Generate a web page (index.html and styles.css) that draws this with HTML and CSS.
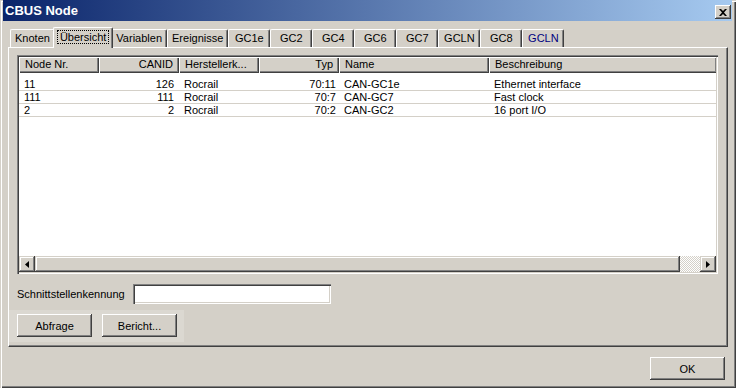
FILE: index.html
```html
<!DOCTYPE html>
<html lang="de">

<head>
    <meta charset="UTF-8">
    <title>CBUS Node</title>
    <link rel="stylesheet" href="styles.css">
</head>

<body>
    <div class="window">
        <div class="titlebar">
            <span class="title">CBUS Node</span>
            <button class="close-btn" type="button">
                <svg width="8" height="7" viewBox="0 0 8 7">
                    <path d="M0 0h2l2 2 2-2h2L5 3.5 8 7H6L4 5 2 7H0l3-3.5z" fill="#000" />
                </svg>
            </button>
        </div>

        <div class="client">
            <div class="tabs">
                <div class="tab">Knoten</div>
                <div class="tab selected"><span class="focus">Übersicht</span></div>
                <div class="tab">Variablen</div>
                <div class="tab">Ereignisse</div>
                <div class="tab">GC1e</div>
                <div class="tab">GC2</div>
                <div class="tab">GC4</div>
                <div class="tab">GC6</div>
                <div class="tab">GC7</div>
                <div class="tab">GCLN</div>
                <div class="tab">GC8</div>
                <div class="tab hot">GCLN</div>
            </div>

            <div class="panel">
                <div class="listview">
                    <div class="lv-header">
                        <div class="col">Node Nr.</div>
                        <div class="col right">CANID</div>
                        <div class="col">Herstellerk...</div>
                        <div class="col right">Typ</div>
                        <div class="col">Name</div>
                        <div class="col">Beschreibung</div>
                    </div>
                    <div class="lv-body">
                        <div class="lv-row">
                            <div class="cell">11</div>
                            <div class="cell right">126</div>
                            <div class="cell">Rocrail</div>
                            <div class="cell right typ">70:11</div>
                            <div class="cell">CAN-GC1e</div>
                            <div class="cell">Ethernet interface</div>
                        </div>
                        <div class="lv-row">
                            <div class="cell">111</div>
                            <div class="cell right">111</div>
                            <div class="cell">Rocrail</div>
                            <div class="cell right typ">70:7</div>
                            <div class="cell">CAN-GC7</div>
                            <div class="cell">Fast clock</div>
                        </div>
                        <div class="lv-row">
                            <div class="cell">2</div>
                            <div class="cell right">2</div>
                            <div class="cell">Rocrail</div>
                            <div class="cell right typ">70:2</div>
                            <div class="cell">CAN-GC2</div>
                            <div class="cell">16 port I/O</div>
                        </div>
                    </div>
                    <div class="hscroll">
                        <div class="sb-btn">
                            <svg width="4" height="7" viewBox="0 0 4 7"><polygon points="4,0 0,3.5 4,7" fill="#000" /></svg>
                        </div>
                        <div class="sb-thumb"></div>
                        <div class="sb-track"></div>
                        <div class="sb-btn">
                            <svg width="4" height="7" viewBox="0 0 4 7"><polygon points="0,0 4,3.5 0,7" fill="#000" /></svg>
                        </div>
                    </div>
                </div>

                <div class="field-row">
                    <label for="ifaceId">Schnittstellenkennung</label>
                    <input class="text-input" type="text" id="ifaceId">
                </div>

                <div class="button-row">
                    <button class="btn" type="button">Abfrage</button>
                    <button class="btn" type="button">Bericht...</button>
                </div>
            </div>

            <div class="footer">
                <button class="btn" type="button">OK</button>
            </div>
        </div>
    </div>
</body>

</html>
```

FILE: styles.css
```css
body {
    margin: 0;
    font-family: "Liberation Sans", Arial, sans-serif;
    font-size: 11px;
    color: #000;
}

.window {
    width: 736px;
    height: 388px;
    box-sizing: border-box;
    background-color: #d4d0c8;
    padding: 0 4px 3px 3px;
    display: flex;
    flex-direction: column;
    box-shadow: inset 1px 1px #d4d0c8, inset 2px 2px #fff, inset -1px -1px #404040, inset -2px -2px #808080;
}

/* title bar */
.titlebar {
    height: 21px;
    flex: none;
    display: flex;
    justify-content: space-between;
    align-items: flex-start;
    background: linear-gradient(to right, #0a246a, #a6caf0);
    color: #fff;
}

.title {
    font-weight: bold;
    font-size: 13px;
    line-height: 21px;
    padding-left: 2px;
}

.close-btn {
    width: 16px;
    height: 14px;
    margin: 5px 1px 0 0;
    padding: 0;
    border: none;
    background-color: #d4d0c8;
    display: flex;
    align-items: center;
    justify-content: center;
    box-shadow: inset -1px -1px #404040, inset 1px 1px #fff, inset -2px -2px #808080;
}

.client {
    flex: 1;
    display: flex;
    flex-direction: column;
    padding: 6px 4px 0 5px;
}

/* tabs */
.tabs {
    height: 20px;
    display: flex;
    align-items: flex-end;
    padding-left: 2px;
}

.tab {
    box-sizing: border-box;
    height: 18px;
    min-width: 42px;
    padding: 2px 4px 0;
    line-height: 13px;
    text-align: center;
    white-space: nowrap;
    border-top: 1px solid #fff;
    border-left: 1px solid #fff;
    border-right: 1px solid #404040;
    border-radius: 2px 2px 0 0;
    box-shadow: inset -1px 0 #808080;
}

.tab.selected {
    height: 21px;
    margin: 0 -2px -1px;
    padding: 2px 3px 0;
    position: relative;
    z-index: 1;
    background-color: #d4d0c8;
}

.tab.hot {
    color: #000080;
}

.focus {
    display: inline-block;
    line-height: 12px;
    padding: 0 2px;
    border: 1px dotted #000;
}

.panel {
    height: 300px;
    box-sizing: border-box;
    padding: 7px 9px 0 8px;
    border: 1px solid;
    border-color: #fff #404040 #404040 #fff;
    box-shadow: inset -1px -1px #808080;
}

/* list view */
.listview {
    height: 219px;
    box-sizing: border-box;
    padding: 2px;
    background-color: #fff;
    display: flex;
    flex-direction: column;
    box-shadow: inset 1px 1px #808080, inset 2px 2px #404040, inset -1px -1px #fff, inset -2px -2px #d4d0c8;
}

.lv-header,
.lv-row {
    display: grid;
    grid-template-columns: 80px 80px 80px 80px 150px 228px;
}

.lv-header {
    height: 16px;
    flex: none;
    overflow: hidden;
}

.lv-header .col {
    padding: 0 6px;
    line-height: 15px;
    white-space: nowrap;
    background-color: #d4d0c8;
    box-shadow: inset 1px 1px #fff, inset -1px -1px #404040, inset -2px -2px #808080;
}

.lv-body {
    flex: 1;
    padding-top: 5px;
    overflow: hidden;
}

.lv-row {
    height: 12px;
    line-height: 12px;
    border-bottom: 1px solid #d4d0c8;
}

.cell {
    padding: 0 5px;
    white-space: nowrap;
    overflow: hidden;
}

.right {
    text-align: right;
}

.cell.typ {
    padding-right: 3px;
}

/* horizontal scrollbar */
.hscroll {
    height: 16px;
    flex: none;
    display: flex;
}

.sb-btn,
.sb-thumb {
    background-color: #d4d0c8;
    box-shadow: inset -1px -1px #404040, inset 1px 1px #d4d0c8, inset -2px -2px #808080, inset 2px 2px #fff;
}

.sb-btn {
    width: 16px;
    flex: none;
    display: flex;
    align-items: center;
    justify-content: center;
}

.sb-thumb {
    flex: 1;
}

.sb-track {
    width: 20px;
    flex: none;
    background: repeating-conic-gradient(#fff 0 25%, #d4d0c8 0 50%) 0 0 / 2px 2px;
}

/* interface field */
.field-row {
    display: flex;
    align-items: center;
    margin-top: 10px;
}

.field-row label {
    width: 116px;
    flex: none;
}

.text-input {
    width: 198px;
    height: 20px;
    box-sizing: border-box;
    padding: 0 3px;
    border: none;
    background-color: #fff;
    font: inherit;
    box-shadow: inset 1px 1px #808080, inset 2px 2px #404040, inset -1px -1px #fff, inset -2px -2px #d4d0c8;
}

/* buttons */
.button-row {
    width: max-content;
    display: flex;
    gap: 10px;
    margin: 6px 0 0 -8px;
    padding: 4px 7px 5px 8px;
    background-color: #dbd8d1;
}

.btn {
    width: 75px;
    height: 23px;
    padding: 0;
    border: none;
    background-color: #d4d0c8;
    font: inherit;
    color: #000;
    box-shadow: inset -1px -1px #404040, inset 1px 1px #fff, inset -2px -2px #808080, inset 2px 2px #d4d0c8;
}

.footer {
    display: flex;
    justify-content: flex-end;
    padding: 10px 3px 0 0;
}
```
